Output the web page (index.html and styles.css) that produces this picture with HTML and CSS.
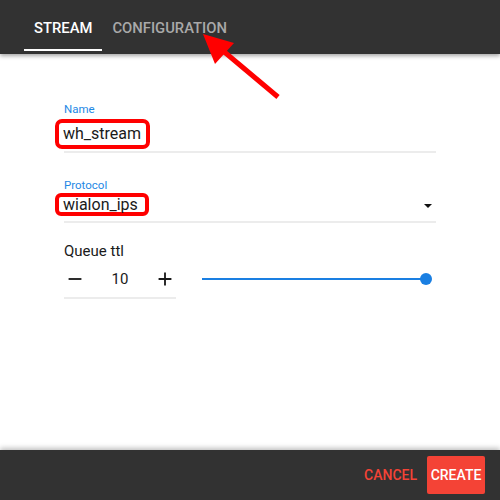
FILE: index.html
```html
<!DOCTYPE html>
<html lang="en">

<head>
    <meta charset="UTF-8">
    <meta name="viewport" content="width=device-width, initial-scale=1.0">
    <title>New stream</title>
    <link rel="stylesheet" href="styles.css">
</head>

<body>
    <div class="dialog">
        <!-- Tabs -->
        <header class="tabs">
            <div class="tab active">STREAM</div>
            <div class="tab">CONFIGURATION</div>
        </header>

        <div class="form">
            <div class="field field-name">
                <label class="field-label">Name</label>
                <div class="field-input">
                    <span class="mark">wh_stream</span>
                </div>
            </div>

            <div class="field field-select">
                <label class="field-label">Protocol</label>
                <div class="field-input">
                    <span class="mark mark-small">wialon_ips</span>
                    <span class="caret"></span>
                </div>
            </div>

            <div class="queue">
                <div class="queue-title">Queue ttl</div>
                <div class="queue-row">
                    <div class="stepper">
                        <svg class="step" width="22" height="22" viewBox="0 0 24 24"><path d="M19 13H5v-2h14v2z" /></svg>
                        <span class="step-value">10</span>
                        <svg class="step" width="22" height="22" viewBox="0 0 24 24"><path d="M19 13h-6v6h-2v-6H5v-2h6V5h2v6h6v2z" /></svg>
                    </div>
                    <div class="slider">
                        <div class="slider-track"></div>
                        <div class="slider-thumb"></div>
                    </div>
                </div>
            </div>
        </div>

        <!-- Footer buttons -->
        <footer class="actions">
            <button class="btn btn-flat">CANCEL</button>
            <button class="btn btn-raised">CREATE</button>
        </footer>
    </div>

    <!-- Annotation arrow -->
    <svg class="arrow" width="500" height="500" viewBox="0 0 500 500">
        <line x1="278" y1="97" x2="222" y2="50" stroke="#f00" stroke-width="5" />
        <polygon points="203,34 234,43 215,64" fill="#f00" />
    </svg>
</body>

</html>
```

FILE: styles.css
```css
body {
    margin: 0;
    padding: 0;
    font-family: Roboto, "Liberation Sans", sans-serif;
    background-color: white;
    position: relative;
}

.dialog {
    width: 500px;
    height: 500px;
    display: flex;
    flex-direction: column;
}

/* Tabs */
.tabs {
    height: 54px;
    background-color: #323232;
    display: flex;
    padding-left: 24px;
    box-shadow: 0 2px 4px rgba(0, 0, 0, 0.35);
    position: relative;
    z-index: 1;
}

.tab {
    padding: 0 10px;
    font-size: 14.8px;
    font-weight: 500;
    color: #a9a9a9;
    line-height: 57px;
    height: 51px;
    box-sizing: border-box;
}

.tab.active {
    color: white;
    border-bottom: 2px solid white;
}

/* Form */
.form {
    flex: 1;
    padding: 48px 64px 0 64px;
}

.field {
    width: 372px;
    border-bottom: 2px solid #ececec;
}

.field-label {
    display: block;
    font-size: 11.5px;
    color: #1e88e5;
    line-height: 14px;
    height: 14px;
}

.field-input {
    display: flex;
    align-items: flex-start;
    font-size: 16px;
    color: #1a1a1a;
}

.field-name {
    margin-bottom: 25px;
}

.field-name .field-input {
    height: 35px;
    padding-top: 3px;
    box-sizing: border-box;
}

.mark {
    margin-left: -9px;
    border: 4px solid #f00;
    border-radius: 7px;
    padding: 1px 4px;
    line-height: 20px;
    width: 95px;
    box-sizing: border-box;
}

.field-select .field-input {
    height: 29px;
    justify-content: space-between;
    align-items: center;
}

.field-select .mark {
    align-self: flex-start;
    margin-top: 1px;
}

.mark-small {
    line-height: 15px;
    padding: 0 4px;
    border-radius: 6px;
    width: 94px;
}

.caret {
    width: 0;
    height: 0;
    border-left: 4px solid transparent;
    border-right: 4px solid transparent;
    border-top: 4px solid #111;
    margin-right: 4px;
    margin-top: -2px;
}

/* Queue ttl */
.queue {
    margin-top: 18px;
}

.queue-title {
    font-size: 15px;
    color: #1a1a1a;
    line-height: 20px;
}

.queue-row {
    display: flex;
    align-items: flex-start;
}

.stepper {
    width: 112px;
    height: 36px;
    display: flex;
    align-items: center;
    justify-content: space-between;
    border-bottom: 2px solid #ececec;
}

.step {
    fill: #1a1a1a;
}

.step-value {
    font-size: 15px;
    color: #1a1a1a;
}

.slider {
    position: relative;
    margin-left: 26px;
    width: 230px;
    height: 12px;
    margin-top: 12px;
}

.slider-track {
    position: absolute;
    left: 0;
    right: 6px;
    top: 5px;
    height: 2px;
    background-color: #1a7fe2;
}

.slider-thumb {
    position: absolute;
    right: 0;
    top: 0;
    width: 12px;
    height: 12px;
    border-radius: 50%;
    background-color: #1a7fe2;
}

/* Footer */
.actions {
    height: 50px;
    background-color: #323232;
    display: flex;
    justify-content: flex-end;
    align-items: center;
    padding-right: 15px;
    box-shadow: 0 -2px 5px rgba(0, 0, 0, 0.25);
}

.btn {
    font-family: Roboto, "Liberation Sans", sans-serif;
    font-size: 14px;
    font-weight: 500;
    border: none;
    height: 38px;
    border-radius: 2px;
    cursor: pointer;
}

.btn-flat {
    background: none;
    color: #f44336;
    padding: 0 10px 0 0;
}

.btn-raised {
    background-color: #f44336;
    color: white;
    padding: 0 3px;
    width: 58px;
}

.arrow {
    position: absolute;
    top: 0;
    left: 0;
    z-index: 5;
    pointer-events: none;
}
```
